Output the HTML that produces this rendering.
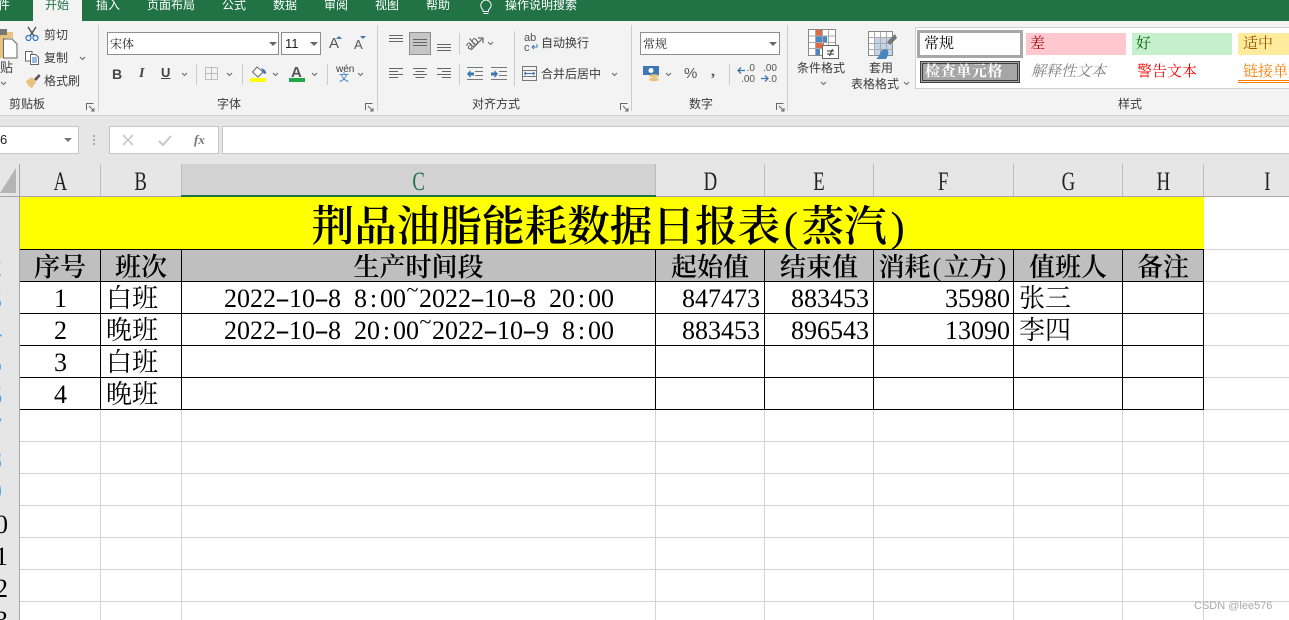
<!DOCTYPE html>
<html lang="zh"><head><meta charset="utf-8"><title>Excel</title>
<style>
html,body{margin:0;padding:0}
body{width:1289px;height:620px;position:relative;overflow:hidden;background:#fff;font-family:"Liberation Sans","Noto Sans CJK SC",sans-serif;font-size:12px;color:#333}
.a,.r,.t,.u,.h{position:absolute}
.u{white-space:nowrap;line-height:16px;color:#3c3c3c}
.tab{color:#fff}
.box{position:absolute;background:#fff;border:1px solid #8e8e8e;box-sizing:border-box}
.r{background:#ccc}
.t{white-space:nowrap;font-family:"Liberation Serif","Noto Serif CJK SC",serif;font-size:26px;line-height:32px;color:#000}
.h{white-space:nowrap;font-family:"Noto Serif CJK SC",serif;font-size:26px;line-height:32px;color:#000;font-weight:600;text-align:center}
.h b{display:inline-block;width:13px;font-family:"Liberation Serif",serif;font-weight:normal;text-align:center}
.h b.big{width:21.5px}
.t i{display:inline-block;width:13px;text-align:center;font-style:normal}
.t i.d{transform:scaleX(1.7)}
.t i.w{position:relative;top:-10px;font-size:22px}
.c{position:absolute;top:168px;height:27px;line-height:27px;text-align:center;font-family:"Liberation Serif",serif;color:#222}
.c span{display:inline-block;font-size:26px;transform:scaleX(.72)}
svg{position:absolute;overflow:visible}
.gs{position:absolute;white-space:nowrap;font-family:"Noto Serif CJK SC",serif;font-size:15px;line-height:22px}
</style></head><body>

<!-- green tab bar -->
<div class="a" style="left:0;top:0;width:1289px;height:21px;background:#217346"></div>
<div class="a" style="left:33px;top:0;width:49px;height:21px;background:#f3f3f3"></div>
<div class="u tab" style="left:-14px;top:-3px">文件</div>
<div class="u" style="left:45px;top:-3px;color:#217346">开始</div>
<div class="u tab" style="left:96px;top:-3px">插入</div>
<div class="u tab" style="left:147px;top:-3px">页面布局</div>
<div class="u tab" style="left:222px;top:-3px">公式</div>
<div class="u tab" style="left:273px;top:-3px">数据</div>
<div class="u tab" style="left:324px;top:-3px">审阅</div>
<div class="u tab" style="left:375px;top:-3px">视图</div>
<div class="u tab" style="left:426px;top:-3px">帮助</div>
<svg style="left:479px;top:0" width="14" height="15" fill="none" stroke="#fff"><path d="M4 10C2 8 1.500 6 2 4S5 0 7 0s4.500 2 5 4-.5 4-2.500 6v1.500h-5.500zM4.500 13.500h5"/></svg>
<div class="u tab" style="left:505px;top:-3px">操作说明搜索</div>

<!-- ribbon -->
<div class="a" style="left:0;top:21px;width:1289px;height:94px;background:#f3f3f3"></div>
<div class="r" style="left:0;top:115px;width:1289px;height:1px;background:#d2d2d2"></div>
<div class="a" style="left:0;top:116px;width:1289px;height:49px;background:#e6e6e6"></div>
<div class="r" style="left:98px;top:25px;width:1px;height:86px"></div>
<div class="r" style="left:377px;top:25px;width:1px;height:86px"></div>
<div class="r" style="left:631px;top:25px;width:1px;height:86px"></div>
<div class="r" style="left:787px;top:25px;width:1px;height:86px"></div>

<!-- clipboard -->
<svg style="left:0;top:28px" width="18" height="34"><path d="M-2 4H13V10H6V30H-2z" fill="#e8c27e"/><rect x="0" y="1" width="7" height="6" fill="#777"/><path d="M3.500 11H12L17 16V30H3.500z" fill="#fff" stroke="#666"/></svg>
<div class="u" style="left:0;top:60px;font-size:13px">贴</div>
<svg style="left:0;top:81px" width="8" height="5" fill="none" stroke="#666"><path d="M1 1l2.500 2.500L6 1"/></svg>
<svg style="left:25px;top:27px" width="15" height="15" fill="none"><path d="M3 0L9 9M11 0L5 9" stroke="#555" stroke-width="1.500"/><circle cx="3.500" cy="11" r="2.500" stroke="#2f77bc" stroke-width="1.200"/><circle cx="10.500" cy="11" r="2.500" stroke="#2f77bc" stroke-width="1.200"/></svg>
<div class="u" style="left:44px;top:27px">剪切</div>
<svg style="left:25px;top:51px" width="15" height="14" fill="#fff" stroke="#666"><path d="M.5.5H7V10H.5z"/><path d="M5.500 3.500H10.500L13.500 6V13.500H5.500z"/><path d="M7 7h5M7 9h5M7 11h5" stroke="#2f77bc"/></svg>
<div class="u" style="left:44px;top:50px">复制</div>
<svg style="left:79px;top:56px" width="8" height="5" fill="none" stroke="#666"><path d="M1 1l2.500 2.500L6 1"/></svg>
<svg style="left:25px;top:74px" width="16" height="15"><path d="M1 7L7 3L11 8L7 14Q3 13 1 7z" fill="#e8c27e"/><path d="M9 5L14 0L15.500 2L11 7z" fill="#555"/></svg>
<div class="u" style="left:44px;top:73px">格式刷</div>
<div class="u" style="left:9px;top:96px">剪贴板</div>
<svg style="left:86px;top:103px" width="9" height="9" fill="none" stroke="#666"><path d="M.5 7V.5H7.500M3 3l5 5M8 5v3H5"/></svg>

<!-- font -->
<div class="box" style="left:107px;top:32px;width:172px;height:23px"></div>
<div class="u" style="left:110px;top:36px;font-family:'Noto Serif CJK SC',serif;color:#222">宋体</div>
<div class="a" style="left:269px;top:42px;border:4px solid transparent;border-top-color:#666;border-bottom:0"></div>
<div class="box" style="left:281px;top:32px;width:40px;height:23px"></div>
<div class="u" style="left:285px;top:36px;color:#222;font-size:13px">11</div>
<div class="a" style="left:310px;top:42px;border:4px solid transparent;border-top-color:#666;border-bottom:0"></div>
<div class="u" style="left:329px;top:36px;font-size:15px;color:#555">A</div>
<div class="a" style="left:336px;top:36px;border:3px solid transparent;border-bottom-color:#3f77b4;border-top:0"></div>
<div class="u" style="left:354px;top:37px;font-size:13px;color:#555">A</div>
<div class="a" style="left:360px;top:36px;border:3px solid transparent;border-top-color:#3f77b4;border-bottom:0"></div>
<div class="u" style="left:112px;top:66px;font-weight:bold;font-size:14px;color:#444">B</div>
<div class="u" style="left:139px;top:66px;font-style:italic;font-weight:bold;font-size:14px;font-family:'Liberation Serif',serif;color:#444">I</div>
<div class="u" style="left:161px;top:65px;font-weight:bold;font-size:13px;color:#444;text-decoration:underline">U</div>
<svg style="left:181px;top:72px" width="8" height="5" fill="none" stroke="#666"><path d="M1 1l2.500 2.500L6 1"/></svg>
<div class="r" style="left:196px;top:64px;width:1px;height:21px"></div>
<svg style="left:205px;top:67px" width="13" height="13" fill="none" stroke="#888" stroke-dasharray="1 1"><path d="M.5.500h12v12H.500zM6.500.500v12M.5 6.500h12"/></svg>
<svg style="left:226px;top:72px" width="8" height="5" fill="none" stroke="#666"><path d="M1 1l2.500 2.500L6 1"/></svg>
<div class="r" style="left:242px;top:64px;width:1px;height:21px"></div>
<svg style="left:251px;top:66px" width="16" height="12"><path d="M6 1L12 6L7 11L1.500 6z" fill="#fff" stroke="#666"/><path d="M10 2Q14 3 15.500 7L13 8z" fill="#3f77b4"/></svg>
<div class="a" style="left:250px;top:78px;width:16px;height:4px;background:#ff0"></div>
<svg style="left:272px;top:72px" width="8" height="5" fill="none" stroke="#666"><path d="M1 1l2.500 2.500L6 1"/></svg>
<div class="u" style="left:291px;top:65px;font-size:15px;font-weight:bold;color:#555">A</div>
<div class="a" style="left:289px;top:78px;width:16px;height:4px;background:#1da84a"></div>
<svg style="left:311px;top:72px" width="8" height="5" fill="none" stroke="#666"><path d="M1 1l2.500 2.500L6 1"/></svg>
<div class="r" style="left:327px;top:64px;width:1px;height:21px"></div>
<div class="u" style="left:336px;top:64px;font-size:10px;line-height:12px">wén</div>
<div class="u" style="left:339px;top:73px;font-size:10px;line-height:12px;color:#2f77bc">文</div>
<svg style="left:357px;top:72px" width="8" height="5" fill="none" stroke="#666"><path d="M1 1l2.500 2.500L6 1"/></svg>
<div class="u" style="left:217px;top:96px">字体</div>
<svg style="left:365px;top:103px" width="9" height="9" fill="none" stroke="#666"><path d="M.5 7V.5H7.500M3 3l5 5M8 5v3H5"/></svg>

<!-- alignment -->
<div class="a" style="left:409px;top:32px;width:22px;height:23px;background:#c6c6c6;border:1px solid #8e8e8e;box-sizing:border-box"></div>
<svg style="left:389px;top:35px" width="68" height="20" stroke="#666" fill="none"><path d="M0 .5h14M0 3.500h14M0 6.500h14M24 4.500h14M24 7.500h14M24 10.500h14M48 9.500h14M48 12.500h14M48 15.500h14"/></svg>
<svg style="left:389px;top:68px" width="68" height="12" stroke="#666" fill="none"><path d="M0 .5h14M0 3.500h9M0 6.500h14M0 9.500h9M24 .5h14M26.500 3.500h9M24 6.500h14M26.500 9.500h9M48 .5h14M53 3.500h9M48 6.500h14M53 9.500h9"/></svg>
<div class="r" style="left:459px;top:33px;width:1px;height:21px"></div>
<div class="r" style="left:459px;top:64px;width:1px;height:21px"></div>
<div class="u" style="left:465px;top:37px;font-size:12px;line-height:12px;transform:rotate(-40deg);color:#555">ab</div>
<svg style="left:468px;top:35px" width="17" height="16" fill="none" stroke="#666" stroke-width="1.200"><path d="M3 15L14 4"/><path d="M10 3h5v5" stroke="#666"/></svg>
<svg style="left:487px;top:41px" width="8" height="5" fill="none" stroke="#666"><path d="M1 1l2.500 2.500L6 1"/></svg>
<svg style="left:467px;top:67px" width="42" height="14" fill="none" stroke="#777"><path d="M0 .5h16M8 4.500h8M8 8.500h8M0 12.500h16M24 .5h16M32 4.500h8M32 8.500h8M24 12.500h16"/></svg>
<svg style="left:467px;top:70px" width="42" height="8"><path d="M7 2.500H3.500V0L0 4l3.500 4V5.500H7zM24 2.500h3.500V0L31 4l-3.500 4V5.500H24z" fill="#3f77b4"/></svg>
<div class="r" style="left:514px;top:31px;width:1px;height:55px"></div>
<div class="u" style="left:524px;top:33px;font-size:11px;line-height:10px;color:#555">ab<br>c</div>
<svg style="left:531px;top:44px" width="7" height="6" fill="none" stroke="#3f77b4"><path d="M6 0v3H1M3 1L1 3l2 2"/></svg>
<div class="u" style="left:541px;top:35px">自动换行</div>
<svg style="left:522px;top:66px" width="15" height="15" fill="none" stroke="#777"><path d="M.5.500h14v14H.5zM.5 4.500h14M.5 10.500h14"/><path d="M3 7.500h9M4 6L2.500 7.500 4 9M11 6l1.500 1.500L11 9" stroke="#3f77b4"/></svg>
<div class="u" style="left:541px;top:66px">合并后居中</div>
<svg style="left:611px;top:72px" width="8" height="5" fill="none" stroke="#666"><path d="M1 1l2.500 2.500L6 1"/></svg>
<div class="u" style="left:472px;top:96px">对齐方式</div>
<svg style="left:620px;top:103px" width="9" height="9" fill="none" stroke="#666"><path d="M.5 7V.5H7.500M3 3l5 5M8 5v3H5"/></svg>

<!-- number -->
<div class="box" style="left:640px;top:32px;width:140px;height:23px"></div>
<div class="u" style="left:643px;top:36px;font-family:'Noto Serif CJK SC',serif;color:#222">常规</div>
<div class="a" style="left:769px;top:42px;border:4px solid transparent;border-top-color:#666;border-bottom:0"></div>
<svg style="left:643px;top:66px" width="17" height="16"><rect x="0" y="0" width="16" height="9" fill="#3f77b4"/><circle cx="8" cy="4.500" r="2.500" fill="#fff"/><ellipse cx="11" cy="10" rx="5" ry="1.700" fill="#e8c27e"/><ellipse cx="11" cy="13.500" rx="5" ry="1.700" fill="#e8c27e"/></svg>
<svg style="left:665px;top:72px" width="8" height="5" fill="none" stroke="#666"><path d="M1 1l2.500 2.500L6 1"/></svg>
<div class="u" style="left:684px;top:66px;font-size:15px;color:#555">%</div>
<div class="u" style="left:711px;top:64px;font-size:16px;font-weight:bold;font-family:'Liberation Serif',serif;color:#555">,</div>
<div class="r" style="left:729px;top:64px;width:1px;height:21px"></div>
<div class="u" style="left:736px;top:63px;font-size:10px;line-height:11px;color:#555;text-align:right;width:19px">.0<br>.00</div>
<div class="u" style="left:758px;top:63px;font-size:10px;line-height:11px;color:#555;text-align:right;width:19px">.00<br>.0</div>
<svg style="left:737px;top:67px" width="9" height="7" fill="none" stroke="#3f77b4" stroke-width="1.300"><path d="M8 3.500H1M4 .5l-3 3 3 3"/></svg>
<svg style="left:761px;top:75px" width="9" height="7" fill="none" stroke="#3f77b4" stroke-width="1.300"><path d="M0 3.500H7M4 .5l3 3-3 3"/></svg>
<div class="u" style="left:689px;top:96px">数字</div>
<svg style="left:776px;top:103px" width="9" height="9" fill="none" stroke="#666"><path d="M.5 7V.5H7.500M3 3l5 5M8 5v3H5"/></svg>

<!-- conditional format -->
<svg style="left:808px;top:29px" width="31" height="30"><rect x=".5" y=".5" width="27" height="26" fill="#fff" stroke="#888"/><rect x="8" y="1" width="6" height="6" fill="#dd6a45"/><rect x="8" y="7" width="11" height="6" fill="#4a86c0"/><rect x="8" y="13" width="8" height="6" fill="#dd6a45"/><rect x="8" y="19" width="4" height="7" fill="#4a86c0"/><path d="M7.500 1v25M14.500 1v25M20.500 1v25M1 7h26M1 13.500h26M1 19.500h26" stroke="#aaa" fill="none"/><rect x="14.500" y="16.500" width="16" height="13" fill="#fff" stroke="#666"/><path d="M19 22h7M19 25h7M24.500 20l-3 7" stroke="#333" fill="none"/></svg>
<div class="u" style="left:797px;top:60px">条件格式</div>
<svg style="left:820px;top:81px" width="8" height="5" fill="none" stroke="#666"><path d="M1 1l2.500 2.500L6 1"/></svg>
<svg style="left:868px;top:31px" width="30" height="28"><rect x=".5" y=".5" width="24" height="24" fill="#fff" stroke="#888"/><rect x="6" y="6" width="18" height="18" fill="#c3d3e8"/><path d="M6.500 1v24M12.500 1v24M18.500 1v24M1 6.500h24M1 12.500h24M1 18.500h24" stroke="#aaa" fill="none"/><path d="M29 7L22 14L19 11L27 3z" fill="#777"/><path d="M8 28Q11 26 13 20Q16 17 20 19Q21 24 18 28z" fill="#4a86c0"/></svg>
<div class="u" style="left:869px;top:60px">套用</div>
<div class="u" style="left:851px;top:76px">表格格式</div>
<svg style="left:903px;top:81px" width="8" height="5" fill="none" stroke="#666"><path d="M1 1l2.500 2.500L6 1"/></svg>

<!-- styles gallery -->
<div class="a" style="left:915px;top:27px;width:380px;height:62px;background:#fff;border:1px solid #d0d0d0;box-sizing:border-box"></div>
<div class="a" style="left:917px;top:30px;width:106px;height:28px;border:3px solid #a8a8a8;box-sizing:border-box;outline:0"></div>
<div class="gs" style="left:924px;top:32px;color:#000">常规</div>
<div class="a" style="left:1026px;top:33px;width:100px;height:22px;background:#ffc7ce"></div>
<div class="gs" style="left:1030px;top:32px;color:#9c0006">差</div>
<div class="a" style="left:1132px;top:33px;width:100px;height:22px;background:#c6efce"></div>
<div class="gs" style="left:1136px;top:32px;color:#006100">好</div>
<div class="a" style="left:1238px;top:33px;width:60px;height:22px;background:#ffeb9c"></div>
<div class="gs" style="left:1243px;top:32px;color:#9c5700">适中</div>
<div class="a" style="left:920px;top:61px;width:100px;height:22px;background:#a5a5a5;border:3px double #3f3f3f;box-sizing:border-box"></div>
<div class="gs" style="left:925px;top:60px;color:#fff;font-weight:bold;letter-spacing:.6px">检查单元格</div>
<div class="gs" style="left:1031px;top:60px;color:#7f7f7f;font-style:italic">解释性文本</div>
<div class="gs" style="left:1137px;top:60px;color:#f00">警告文本</div>
<div class="gs" style="left:1243px;top:60px;color:#fa7d00">链接单元格</div>
<div class="a" style="left:1238px;top:80px;width:60px;height:3px;border-top:1px solid #fa7d00;border-bottom:1px solid #fa7d00;box-sizing:border-box"></div>
<div class="u" style="left:1118px;top:96px">样式</div>

<!-- formula bar -->
<div class="a" style="left:-2px;top:126px;width:81px;height:28px;background:#fff;border:1px solid #c6c6c6;box-sizing:border-box"></div>
<div class="u" style="left:-8px;top:132px;color:#222;font-size:13px">F6</div>
<div class="a" style="left:64px;top:138px;border:4px solid transparent;border-top-color:#777;border-bottom:0"></div>
<svg style="left:93px;top:135px" width="3" height="11" fill="#aaa"><rect width="2" height="2"/><rect y="4" width="2" height="2"/><rect y="8" width="2" height="2"/></svg>
<div class="a" style="left:109px;top:126px;width:110px;height:28px;background:#fff;border:1px solid #c6c6c6;box-sizing:border-box"></div>
<svg style="left:122px;top:135px" width="12" height="11" fill="none" stroke="#c8c8c8" stroke-width="1.600"><path d="M1 0l10 10M11 0L1 10"/></svg>
<svg style="left:158px;top:135px" width="14" height="11" fill="none" stroke="#c8c8c8" stroke-width="2"><path d="M1 6l4 4L13 1"/></svg>
<div class="u" style="left:194px;top:132px;font-family:'Liberation Serif',serif;font-style:italic;font-weight:bold;font-size:13px;color:#777">fx</div>
<div class="a" style="left:222px;top:126px;width:1070px;height:28px;background:#fff;border:1px solid #c6c6c6;box-sizing:border-box"></div>

<!-- column headers -->
<div class="a" style="left:0;top:164px;width:1289px;height:32px;background:#e6e6e6"></div>
<div class="a" style="left:182px;top:164px;width:473px;height:31px;background:#d2d2d2"></div>
<svg style="left:0;top:168px" width="17" height="25"><path d="M16 0V25H0z" fill="#b4b4b4"/></svg>
<div class="c" style="left:20px;width:80px"><span>A</span></div>
<div class="c" style="left:101px;width:80px"><span>B</span></div>
<div class="c" style="left:182px;width:473px;color:#217346"><span>C</span></div>
<div class="c" style="left:656px;width:108px"><span>D</span></div>
<div class="c" style="left:765px;width:108px"><span>E</span></div>
<div class="c" style="left:874px;width:139px"><span>F</span></div>
<div class="c" style="left:1014px;width:108px"><span>G</span></div>
<div class="c" style="left:1123px;width:80px"><span>H</span></div>
<div class="c" style="left:1227px;width:80px"><span>I</span></div>
<div class="r" style="left:100px;top:164px;width:1px;height:32px;background:#bbb"></div>
<div class="r" style="left:181px;top:164px;width:1px;height:32px;background:#bbb"></div>
<div class="r" style="left:655px;top:164px;width:1px;height:32px;background:#bbb"></div>
<div class="r" style="left:764px;top:164px;width:1px;height:32px;background:#bbb"></div>
<div class="r" style="left:873px;top:164px;width:1px;height:32px;background:#bbb"></div>
<div class="r" style="left:1013px;top:164px;width:1px;height:32px;background:#bbb"></div>
<div class="r" style="left:1122px;top:164px;width:1px;height:32px;background:#bbb"></div>
<div class="r" style="left:1203px;top:164px;width:1px;height:32px;background:#bbb"></div>
<div class="r" style="left:0;top:196px;width:1289px;height:1px;background:#a6a6a6"></div>
<div class="r" style="left:181px;top:195px;width:475px;height:2px;background:#217346"></div>

<!-- row headers -->
<div class="a" style="left:0;top:197px;width:19px;height:423px;background:#e6e6e6;overflow:hidden">
<div class="t" style="left:-11px;top:55px;color:#4aa3e8">2</div>
<div class="t" style="left:-11px;top:87px;color:#4aa3e8">3</div>
<div class="t" style="left:-11px;top:119px;color:#4aa3e8">4</div>
<div class="t" style="left:-11px;top:151px;color:#4aa3e8">5</div>
<div class="t" style="left:-11px;top:183px;color:#4aa3e8">6</div>
<div class="t" style="left:-11px;top:215px;color:#4aa3e8">7</div>
<div class="t" style="left:-11px;top:247px;color:#4aa3e8">8</div>
<div class="t" style="left:-11px;top:279px;color:#4aa3e8">9</div>
<div class="t" style="left:-5px;top:312px">0</div>
<div class="t" style="left:-5px;top:344px">1</div>
<div class="t" style="left:-5px;top:376px">2</div>
<div class="t" style="left:-5px;top:408px">3</div>
</div>
<div class="r" style="left:19px;top:164px;width:1px;height:456px;background:#a6a6a6"></div>

<!-- gridlines -->
<div class="r" style="left:20px;top:249px;width:1269px;height:1px;background:#d4d4d4"></div>
<div class="r" style="left:20px;top:281px;width:1269px;height:1px;background:#d4d4d4"></div>
<div class="r" style="left:20px;top:313px;width:1269px;height:1px;background:#d4d4d4"></div>
<div class="r" style="left:20px;top:345px;width:1269px;height:1px;background:#d4d4d4"></div>
<div class="r" style="left:20px;top:377px;width:1269px;height:1px;background:#d4d4d4"></div>
<div class="r" style="left:20px;top:409px;width:1269px;height:1px;background:#d4d4d4"></div>
<div class="r" style="left:20px;top:441px;width:1269px;height:1px;background:#d4d4d4"></div>
<div class="r" style="left:20px;top:473px;width:1269px;height:1px;background:#d4d4d4"></div>
<div class="r" style="left:20px;top:505px;width:1269px;height:1px;background:#d4d4d4"></div>
<div class="r" style="left:20px;top:537px;width:1269px;height:1px;background:#d4d4d4"></div>
<div class="r" style="left:20px;top:569px;width:1269px;height:1px;background:#d4d4d4"></div>
<div class="r" style="left:20px;top:601px;width:1269px;height:1px;background:#d4d4d4"></div>
<div class="r" style="left:100px;top:409px;width:1px;height:211px;background:#d4d4d4"></div>
<div class="r" style="left:181px;top:409px;width:1px;height:211px;background:#d4d4d4"></div>
<div class="r" style="left:655px;top:409px;width:1px;height:211px;background:#d4d4d4"></div>
<div class="r" style="left:764px;top:409px;width:1px;height:211px;background:#d4d4d4"></div>
<div class="r" style="left:873px;top:409px;width:1px;height:211px;background:#d4d4d4"></div>
<div class="r" style="left:1013px;top:409px;width:1px;height:211px;background:#d4d4d4"></div>
<div class="r" style="left:1122px;top:409px;width:1px;height:211px;background:#d4d4d4"></div>
<div class="r" style="left:1203px;top:197px;width:1px;height:423px;background:#d4d4d4"></div>

<!-- title and header fills -->
<div class="a" style="left:20px;top:197px;width:1184px;height:52px;background:#ff0"></div>
<div class="a" style="left:20px;top:250px;width:1184px;height:31px;background:#bfbfbf"></div>

<!-- table black lines -->
<div class="r" style="left:20px;top:249px;width:1184px;height:1px;background:#000"></div>
<div class="r" style="left:20px;top:281px;width:1184px;height:1px;background:#000"></div>
<div class="r" style="left:20px;top:313px;width:1184px;height:1px;background:#000"></div>
<div class="r" style="left:20px;top:345px;width:1184px;height:1px;background:#000"></div>
<div class="r" style="left:20px;top:377px;width:1184px;height:1px;background:#000"></div>
<div class="r" style="left:20px;top:409px;width:1184px;height:1px;background:#000"></div>
<div class="r" style="left:100px;top:249px;width:1px;height:161px;background:#000"></div>
<div class="r" style="left:181px;top:249px;width:1px;height:161px;background:#000"></div>
<div class="r" style="left:655px;top:249px;width:1px;height:161px;background:#000"></div>
<div class="r" style="left:764px;top:249px;width:1px;height:161px;background:#000"></div>
<div class="r" style="left:873px;top:249px;width:1px;height:161px;background:#000"></div>
<div class="r" style="left:1013px;top:249px;width:1px;height:161px;background:#000"></div>
<div class="r" style="left:1122px;top:249px;width:1px;height:161px;background:#000"></div>
<div class="r" style="left:1203px;top:249px;width:1px;height:161px;background:#000"></div>

<!-- title -->
<div class="h" style="left:18px;top:198px;width:1184px;font-size:42.600px;line-height:52px">荆品油脂能耗数据日报表<b class="big">(</b>蒸汽<b class="big">)</b></div>

<!-- header row -->
<div class="h" style="left:20px;top:250px;width:80px">序号</div>
<div class="h" style="left:101px;top:250px;width:80px">班次</div>
<div class="h" style="left:182px;top:250px;width:473px">生产时间段</div>
<div class="h" style="left:656px;top:250px;width:108px">起始值</div>
<div class="h" style="left:765px;top:250px;width:108px">结束值</div>
<div class="h" style="left:874px;top:250px;width:139px">消耗<b>(</b>立方<b>)</b></div>
<div class="h" style="left:1014px;top:250px;width:108px">值班人</div>
<div class="h" style="left:1123px;top:250px;width:80px">备注</div>

<!-- data -->
<div class="t" style="left:54px;top:283px">1</div>
<div class="t" style="left:54px;top:315px">2</div>
<div class="t" style="left:54px;top:347px">3</div>
<div class="t" style="left:54px;top:379px">4</div>
<div class="t" style="left:106px;top:283px">白班</div>
<div class="t" style="left:106px;top:315px">晚班</div>
<div class="t" style="left:106px;top:347px">白班</div>
<div class="t" style="left:106px;top:379px">晚班</div>
<div class="t" style="left:224px;top:283px">2022<i class="d">-</i>10<i class="d">-</i>8<i>&nbsp;</i>8<i>:</i>00<i class="w">~</i>2022<i class="d">-</i>10<i class="d">-</i>8<i>&nbsp;</i>20<i>:</i>00</div>
<div class="t" style="left:224px;top:315px">2022<i class="d">-</i>10<i class="d">-</i>8<i>&nbsp;</i>20<i>:</i>00<i class="w">~</i>2022<i class="d">-</i>10<i class="d">-</i>9<i>&nbsp;</i>8<i>:</i>00</div>
<div class="t" style="left:682px;top:283px">847473</div>
<div class="t" style="left:682px;top:315px">883453</div>
<div class="t" style="left:791px;top:283px">883453</div>
<div class="t" style="left:791px;top:315px">896543</div>
<div class="t" style="left:945px;top:283px">35980</div>
<div class="t" style="left:945px;top:315px">13090</div>
<div class="t" style="left:1019px;top:283px">张三</div>
<div class="t" style="left:1019px;top:315px">李四</div>

<div class="u" style="left:1194px;top:598px;font-size:11px;color:#a8a8a8">CSDN @lee576</div>
</body></html>
